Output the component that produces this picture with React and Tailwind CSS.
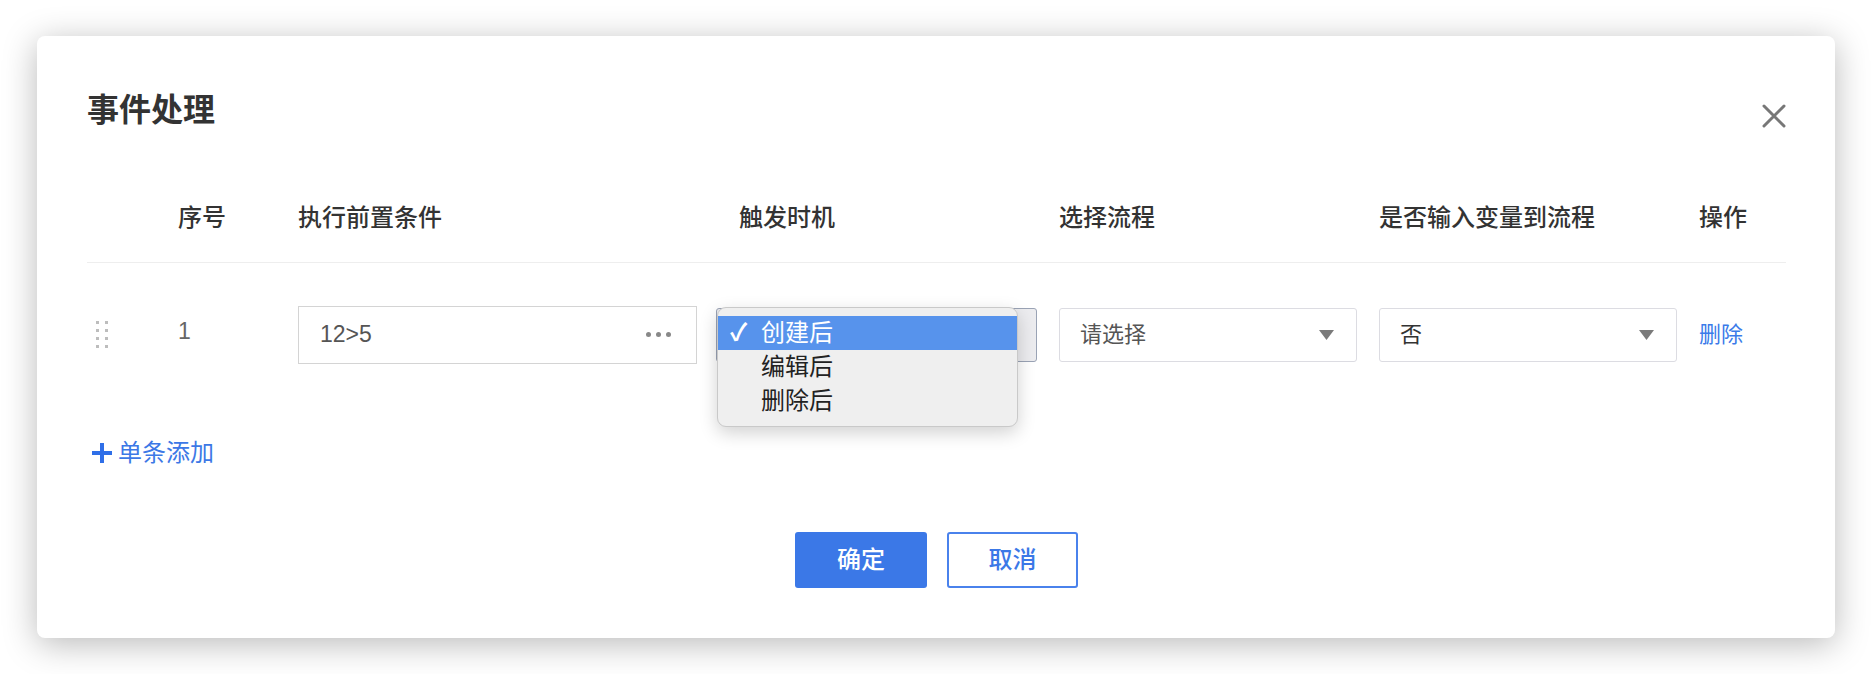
import { useState } from "react";

const font = { fontFamily: '"Liberation Sans", "Noto Sans CJK SC", sans-serif' };

const Caret = () => (
  <svg width="15" height="10" viewBox="0 0 15 10" className="shrink-0">
    <path d="M0 0 L15 0 L7.5 10 Z" fill="#7a7a7a" />
  </svg>
);

const DragHandle = () => (
  <div className="grid grid-cols-2 gap-x-[6px] gap-y-[5px] w-fit">
    {Array.from({ length: 8 }).map((_, i) => (
      <span key={i} className="block w-[3px] h-[3px] bg-[#bdbdbd]" />
    ))}
  </div>
);

const TriggerMenu = ({ value, onSelect }) => {
  const options = ["创建后", "编辑后", "删除后"];
  return (
    <div className="absolute left-[1px] top-[-1px] w-[301px] rounded-[9px] border border-[#c9c9c9] bg-[#efefef] pt-[8px] pb-[8px] shadow-[0_6px_18px_rgba(0,0,0,0.18)] z-10">
      {options.map((opt) => {
        const active = opt === value;
        return (
          <div
            key={opt}
            onClick={() => onSelect(opt)}
            className={
              active
                ? "flex items-center h-[34px] bg-[#5793ec] text-white text-[24px] leading-none cursor-default"
                : "flex items-center h-[34px] text-[#222] text-[24px] leading-none cursor-default"
            }
          >
            <span className="w-[43px] pl-[12px] text-[24px] font-bold">{active ? "✓" : ""}</span>
            <span>{opt}</span>
          </div>
        );
      })}
    </div>
  );
};

const EventDialog = () => {
  const [trigger, setTrigger] = useState("创建后");

  return (
    <div className="w-[1798px] h-[602px] bg-white rounded-[8px] shadow-[0_6px_34px_rgba(0,0,0,0.28)] pt-[54px] pl-[50px] pr-[49px] flex flex-col">
      <div className="flex items-center justify-between h-[40px]">
        <h2 className="text-[32px] font-bold text-[#333] leading-[40px]">事件处理</h2>
        <svg width="24" height="24" viewBox="0 0 24 24" className="mt-[12px] cursor-pointer">
          <path d="M2 2 L22 22 M22 2 L2 22" stroke="#777" strokeWidth="3" strokeLinecap="round" />
        </svg>
      </div>

      <div className="mt-[72px] flex text-[24px] leading-[32px] font-medium text-[#333] pb-[28px] border-b border-[#eeeeee]">
        <div className="w-[91px]" />
        <div className="w-[120px]">序号</div>
        <div className="w-[418px]">执行前置条件</div>
        <div className="w-[343px] pl-[23px]">触发时机</div>
        <div className="w-[320px]">选择流程</div>
        <div className="w-[320px]">是否输入变量到流程</div>
        <div>操作</div>
      </div>

      <div className="mt-[43px] flex items-center h-[57px] text-[22px]">
        <div className="w-[91px] pl-[9px] flex items-center">
          <DragHandle />
        </div>
        <div className="w-[120px] text-[#666] text-[23px] -mt-[6px]">1</div>
        <div className="w-[418px]">
          <div className="w-[399px] h-[58px] border border-[#d4d4d4] flex items-center justify-between pl-[21px] pr-[25px] text-[23px] text-[#555]">
            <span>12&gt;5</span>
            <span className="flex gap-[5px]">
              <i className="block w-[5px] h-[5px] rounded-full bg-[#888]" />
              <i className="block w-[5px] h-[5px] rounded-full bg-[#888]" />
              <i className="block w-[5px] h-[5px] rounded-full bg-[#888]" />
            </span>
          </div>
        </div>
        <div className="w-[343px] relative">
          <div className="w-[321px] h-[54px] border border-[#9aa3b5] rounded-[3px] bg-[#ececef]" />
          <TriggerMenu value={trigger} onSelect={setTrigger} />
        </div>
        <div className="w-[320px]">
          <div className="w-[298px] h-[54px] border border-[#dcdce2] rounded-[3px] flex items-center justify-between pl-[20px] pr-[22px] text-[#555]">
            <span>请选择</span>
            <Caret />
          </div>
        </div>
        <div className="w-[320px]">
          <div className="w-[298px] h-[54px] border border-[#dcdce2] rounded-[3px] flex items-center justify-between pl-[20px] pr-[22px] text-[#333]">
            <span>否</span>
            <Caret />
          </div>
        </div>
        <div className="text-[#3b7be9] text-[22px] cursor-pointer">删除</div>
      </div>

      <div className="mt-[74px] flex items-center h-[32px] text-[24px] text-[#3c78e6] cursor-pointer w-fit">
        <svg width="20" height="20" viewBox="0 0 20 20" className="ml-[5px] mr-[6px]">
          <path d="M10 0 V20 M0 10 H20" stroke="#2f6fe8" strokeWidth="4" />
        </svg>
        <span>单条添加</span>
      </div>

      <div className="mt-[63px] flex justify-center gap-[20px]">
        <button className="w-[132px] h-[56px] rounded-[3px] bg-[#3b78e7] text-white text-[24px] font-medium">
          确定
        </button>
        <button className="w-[131px] h-[56px] rounded-[3px] border-2 border-[#4a82ec] bg-white text-[#3b78e7] text-[24px] font-medium">
          取消
        </button>
      </div>
    </div>
  );
};

export default function App() {
  return (
    <div className="w-[1872px] h-[674px] bg-white pt-[36px] pl-[37px] overflow-hidden" style={font}>
      <EventDialog />
    </div>
  );
}
